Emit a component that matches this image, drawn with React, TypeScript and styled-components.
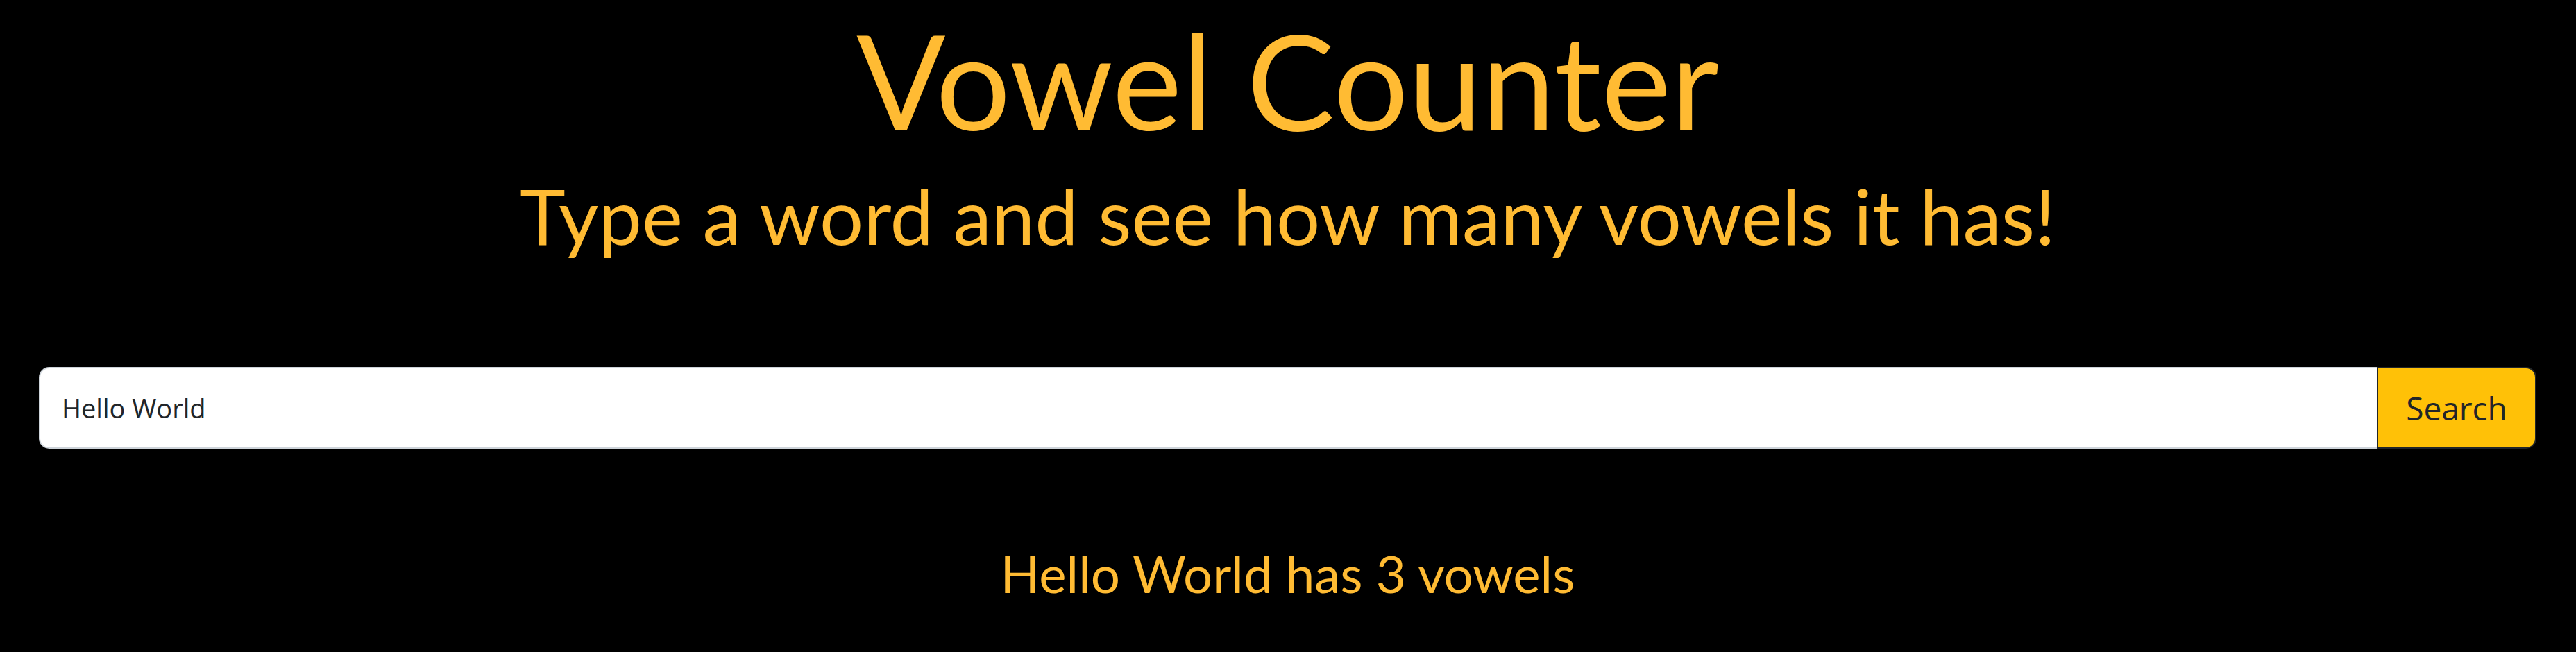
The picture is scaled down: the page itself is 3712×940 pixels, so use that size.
import React, { useState } from "react";
import styled, { createGlobalStyle } from "styled-components";

const Global = createGlobalStyle`
  html, body { margin: 0; padding: 0; background: #000; }
  body { font-family: "Lato", "Open Sans", sans-serif; }
`;

const Page = styled.div`
  background: #000;
  min-height: 940px;
  padding: 0 57px 0 56px;
  box-sizing: border-box;
  display: flex;
  flex-direction: column;
  align-items: stretch;
`;

const Title = styled.h1`
  margin: 0;
  font-family: "Lato", sans-serif;
  font-weight: 400;
  font-size: 190px;
  line-height: 1.2;
  color: #ffbb33;
  text-align: center;
`;

const Subtitle = styled.h2`
  margin: 27px 0 0;
  font-family: "Lato", sans-serif;
  font-weight: 400;
  font-size: 111.5px;
  line-height: 1;
  color: #ffbb33;
  text-align: center;
`;

const SearchRow = styled.form`
  margin-top: 162px;
  display: flex;
  height: 118px;
`;

const Input = styled.input`
  flex: 1;
  min-width: 0;
  box-sizing: border-box;
  height: 100%;
  padding: 0 31px;
  font-family: "Open Sans", sans-serif;
  font-size: 38px;
  color: #212529;
  background: #fff;
  border: 2px solid #ced4da;
  border-right: none;
  border-radius: 15px 0 0 15px;
  outline: none;
`;

const Button = styled.button`
  width: 230px;
  height: 100%;
  box-sizing: border-box;
  font-family: "Open Sans", sans-serif;
  font-size: 46px;
  color: #212529;
  background: #ffc107;
  border: 2px solid #212529;
  border-radius: 0 15px 15px 0;
  cursor: pointer;
`;

const Result = styled.p`
  margin: 142px 0 0;
  font-family: "Lato", sans-serif;
  font-size: 74.5px;
  line-height: 1;
  color: #ffbb33;
  text-align: center;
`;

const countVowels = (s: string) => (s.match(/[aeiou]/gi) || []).length;

export default function App() {
  const [value, setValue] = useState("Hello World");
  const [word, setWord] = useState("Hello World");
  return (
    <>
      <Global />
      <Page>
        <Title>Vowel Counter</Title>
        <Subtitle>Type a word and see how many vowels it has!</Subtitle>
        <SearchRow
          onSubmit={(e) => {
            e.preventDefault();
            setWord(value);
          }}
        >
          <Input value={value} onChange={(e) => setValue(e.target.value)} />
          <Button type="submit">Search</Button>
        </SearchRow>
        <Result>
          {word} has {countVowels(word)} vowels
        </Result>
      </Page>
    </>
  );
}
